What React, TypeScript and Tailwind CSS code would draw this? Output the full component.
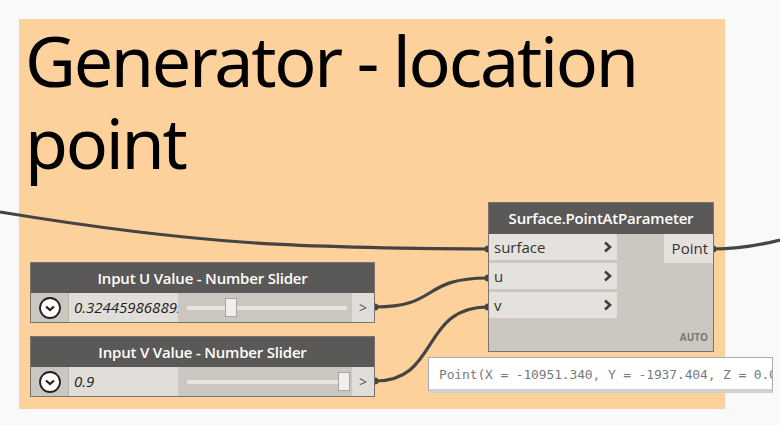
import React from "react";

const ui = { fontFamily: '"Open Sans", "Noto Sans", sans-serif' };

function Chevron() {
  return (
    <svg width="10" height="12" viewBox="0 0 10 12">
      <path d="M2 1.5 L7 6 L2 10.5" fill="none" stroke="#3b4046" strokeWidth="2.6" />
    </svg>
  );
}

function DropIcon() {
  return (
    <svg width="24" height="24" viewBox="0 0 24 24">
      <circle cx="12" cy="12" r="10" fill="#fff" stroke="#222" strokeWidth="1.8" />
      <path d="M8 10.5 L12 14 L16 10.5" fill="none" stroke="#222" strokeWidth="2.2" />
    </svg>
  );
}

function Slider({ top, title, value, thumb }: { top: number; title: string; value: string; thumb: number }) {
  return (
    <div
      className="absolute left-[30px] w-[345px] border border-[#77736e] bg-[#cbc7c0]"
      style={{ top }}
    >
      <div className="flex h-[30px] items-center justify-center bg-[#5b5957] text-[15px] font-semibold text-white" style={{ ...ui, letterSpacing: "-0.2px" }}>
        {title}
      </div>
      <div className="flex h-[29px] items-stretch">
        <div className="flex w-[37px] items-center justify-center">
          <DropIcon />
        </div>
        <div className="flex w-[110px] items-center overflow-hidden whitespace-nowrap border-l border-[#b8b4ae] bg-[#e1ded9] pl-[5px] text-[15px] italic text-[#222]" style={ui}>
          {value}
        </div>
        <div className="relative flex-1">
          <div className="absolute left-[9px] right-[5px] top-[13px] h-[4px] bg-[#e6e4e1]" />
          <div
            className="absolute top-[5px] h-[19px] w-[12px] border border-[#a9a6a2] bg-[#f0efee]"
            style={{ left: thumb }}
          />
        </div>
        <div className="flex w-[22px] items-center justify-center bg-[#e1ded9] text-[14px] text-[#555]" style={ui}>
          &gt;
        </div>
      </div>
    </div>
  );
}

function Port({ name }: { name: string }) {
  return (
    <div className="flex h-[29px] items-center justify-between border-b-[3px] border-[#ccc8c1] bg-[#e5e2de] pl-[5px] pr-[4px] text-[15px] text-[#333]" style={ui}>
      <span>{name}</span>
      <Chevron />
    </div>
  );
}

export default function App() {
  return (
    <div className="relative h-[425px] w-[780px] overflow-hidden bg-[#f9f9f9]">
      <div className="absolute left-[19px] top-[19px] h-[390px] w-[706px] bg-[#fcd19c]">
        <div
          className="pl-[6px] text-[70px] leading-[82px] text-black"
          style={{ fontFamily: '"Noto Sans", "Open Sans", sans-serif', letterSpacing: "-2.3px" }}
        >
          Generator - location
          <br />
          point
        </div>
      </div>

      <svg className="absolute left-0 top-0" width="780" height="425">
        <g fill="none" stroke="#444" strokeWidth="3.2">
          <path d="M0 212 C 200 245, 300 248, 488 249" />
          <path d="M375 307 C 440 307, 420 278, 488 278" />
          <path d="M375 381 C 440 381, 420 307, 488 307" />
          <path d="M713 249 C 740 249, 760 245, 780 240" />
        </g>
        <g fill="#444">
          <circle cx="488" cy="249" r="3.5" />
          <circle cx="488" cy="278" r="3.5" />
          <circle cx="488" cy="307" r="3.5" />
          <circle cx="713" cy="249" r="3.5" />
          <circle cx="375" cy="307" r="3.5" />
          <circle cx="375" cy="381" r="3.5" />
        </g>
      </svg>

      <Slider top={262} title="Input U Value - Number Slider" value="0.324459868892" thumb={47} />
      <Slider top={336} title="Input V Value - Number Slider" value="0.9" thumb={160} />

      <div className="absolute left-[488px] top-[202px] h-[150px] w-[226px] border border-[#77736e] bg-[#ccc8c1]">
        <div className="flex h-[31px] items-center justify-center bg-[#5b5957] text-[15px] font-semibold text-white" style={{ ...ui, letterSpacing: "-0.2px" }}>
          Surface.PointAtParameter
        </div>
        <div className="flex">
          <div className="w-[128px]">
            <Port name="surface" />
            <Port name="u" />
            <Port name="v" />
          </div>
          <div className="flex flex-1 justify-end">
            <div className="flex h-[29px] w-[49px] items-center justify-end bg-[#e5e2de] pr-[5px] text-[15px] text-[#333]" style={ui}>
              Point
            </div>
          </div>
        </div>
        <div className="absolute bottom-[6px] right-[5px] text-[10px] font-bold text-[#777]" style={ui}>
          AUTO
        </div>
      </div>

      <div className="absolute left-[428px] top-[357px] h-[36px] w-[345px] border border-[#aaa] border-b-[4px] border-b-[#d0d0d0] bg-white">
        <div
          className="overflow-hidden whitespace-nowrap pl-[10px] pt-[7px] text-[13px] text-[#7a7a7a]"
          style={{ fontFamily: '"DejaVu Sans Mono", "Liberation Mono", monospace', letterSpacing: "-0.15px" }}
        >
          Point(X = -10951.340, Y = -1937.404, Z = 0.000)
        </div>
      </div>
    </div>
  );
}
